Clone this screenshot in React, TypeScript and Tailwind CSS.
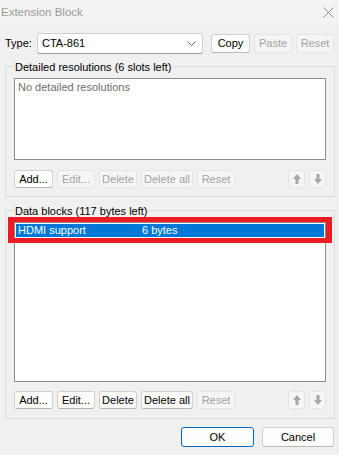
type BtnProps = {
  label?: string;
  w: string;
  disabled?: boolean;
  primary?: boolean;
  className?: string;
  children?: React.ReactNode;
};

function Btn({ label, w, disabled, primary, className = '', children }: BtnProps) {
  const tone = disabled
    ? 'bg-[#f5f5f5] border-[#e5e5e5] text-[#a3a3a3]'
    : primary
      ? 'bg-[#fdfdfd] border-[#0067c0] text-black'
      : 'bg-[#fdfdfd] border-[#d0d0d0] border-b-[#b7b7b7] text-black';
  return (
    <div
      className={`${w} ${tone} ${className} h-full flex-none flex items-center justify-center border rounded-[3px] leading-none whitespace-nowrap`}
    >
      {children ?? label}
    </div>
  );
}

function Arrow({ up }: { up?: boolean }) {
  return (
    <svg width="8" height="10" viewBox="0 0 8 10" className={up ? '' : 'rotate-180'}>
      <path d="M4 0 L8 5 H5.5 V10 H2.5 V5 H0 Z" fill="#a6a6a6" />
    </svg>
  );
}

function ListButtons({ allEnabled }: { allEnabled: boolean }) {
  return (
    <div className="mt-[10px] ml-[8px] mr-[8px] h-[18px] flex">
      <Btn label="Add..." w="w-[39px]" />
      <Btn label="Edit..." w="w-[38px]" className="ml-[4px]" disabled={!allEnabled} />
      <Btn label="Delete" w="w-[38px]" className="ml-[4px]" disabled={!allEnabled} />
      <Btn label="Delete all" w="w-[52px]" className="ml-[4px]" disabled={!allEnabled} />
      <Btn label="Reset" w="w-[38px]" className="ml-[4px]" disabled />
      <Btn w="w-[17px]" className="ml-auto" disabled>
        <Arrow up />
      </Btn>
      <Btn w="w-[17px]" className="ml-[4px]" disabled>
        <Arrow />
      </Btn>
    </div>
  );
}

export default function App() {
  return (
    <div
      className="relative w-[339px] h-[455px] bg-[#f0f0f0] flex flex-col overflow-hidden text-[11px] text-black"
      style={{ fontFamily: '"Liberation Sans", Arial, sans-serif' }}
    >
      {/* Title bar */}
      <div className="h-[25px] flex-none bg-[#f3f3f3] flex items-center justify-between pl-[1px] pr-[5px]">
        <span className="text-[11.5px] text-[#9a9a9a]">Extension Block</span>
        <svg width="11" height="11" viewBox="0 0 11 11">
          <path d="M0.5 0.5 L10.5 10.5 M10.5 0.5 L0.5 10.5" stroke="#8a8a8a" strokeWidth="1" />
        </svg>
      </div>

      {/* Type row */}
      <div className="mt-[8px] h-[21px] flex items-center pl-[5px]">
        <span className="w-[32px] flex-none">Type:</span>
        <div className="w-[166px] h-[21px] flex items-center justify-between bg-white border border-[#cfcfcf] border-b-[#9a9a9a] rounded-[3px] pl-[4px] pr-[6px]">
          <span>CTA-861</span>
          <svg width="9" height="5" viewBox="0 0 9 5">
            <path d="M0.5 0.5 L4.5 4.5 L8.5 0.5" fill="none" stroke="#606060" strokeWidth="1" />
          </svg>
        </div>
        <div className="ml-[8px] h-[19px] flex">
          <Btn label="Copy" w="w-[39px]" />
          <Btn label="Paste" w="w-[38px]" className="ml-[4px]" disabled />
          <Btn label="Reset" w="w-[38px]" className="ml-[4px]" disabled />
        </div>
      </div>

      {/* Detailed resolutions */}
      <div className="mt-[12px] ml-[5px] w-[330px] h-[131px] flex-none border border-[#dcdcdc] flex flex-col">
        <div className="-mt-[8px] ml-[8px] w-fit px-[1px] bg-[#f0f0f0] leading-[16px]">
          Detailed resolutions (6 slots left)
        </div>
        <div className="mt-[3px] ml-[8px] w-[312px] h-[82px] bg-white border border-[#8c8c8c] pl-[3px] pt-[1px] text-[#6d6d6d] leading-[15px]">
          No detailed resolutions
        </div>
        <ListButtons allEnabled={false} />
      </div>

      {/* Data blocks */}
      <div className="mt-[13px] ml-[5px] w-[330px] h-[209px] flex-none border border-[#dcdcdc] flex flex-col">
        <div className="-mt-[8px] ml-[8px] w-fit px-[1px] bg-[#f0f0f0] leading-[16px]">
          Data blocks (117 bytes left)
        </div>
        <div className="mt-[3px] ml-[8px] w-[312px] h-[160px] bg-white border border-[#8c8c8c]">
          <div className="h-[15px] border border-white bg-[#0078d7] text-white flex items-center leading-[13px]">
            <span className="ml-[2px] w-[124px]">HDMI support</span>
            <span>6 bytes</span>
          </div>
        </div>
        <div className="-mt-[1px]">
          <ListButtons allEnabled />
        </div>
      </div>

      {/* Dialog buttons */}
      <div className="mt-[8px] h-[20px] flex justify-end pr-[5px]">
        <Btn label="OK" w="w-[73px]" primary />
        <Btn label="Cancel" w="w-[72px]" className="ml-[8px]" />
      </div>

      {/* Highlight annotation */}
      <div className="absolute left-[8px] top-[217px] w-[324px] h-[26px] border-x-[6px] border-y-[5px] border-[#ed1c24]" />
    </div>
  );
}
